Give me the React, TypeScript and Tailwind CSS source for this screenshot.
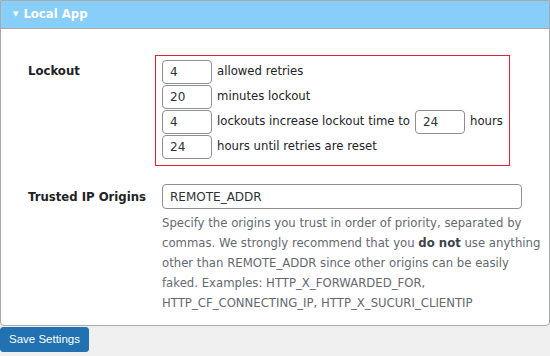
import React from "react";

const font = { fontFamily: '"DejaVu Sans", Verdana, sans-serif' };

function NumInput({ value, className = "w-[50px]" }: { value: string; className?: string }) {
  return (
    <input
      defaultValue={value}
      className={`${className} h-[24px] rounded-[4px] border border-[#8c8f94] bg-white px-[7px] text-[12px] text-[#2c3338] outline-none`}
      style={font}
    />
  );
}

function LockoutRow({ children }: { children: React.ReactNode }) {
  return <div className="flex h-[25px] items-center gap-[5px]">{children}</div>;
}

export default function App() {
  return (
    <div className="h-[356px] w-[550px] overflow-hidden bg-[#f0f0f1] text-[11.7px] text-[#1d2327]" style={font}>
      {/* Panel */}
      <div className="h-[326px] rounded-b-[4px] border border-[#a7aaad] bg-white">
        <div className="flex h-[28px] items-center gap-[5px] border-b border-[#a7aaad] bg-[#87cefa] pl-[12px] font-bold text-white">
          <span className="text-[7px]">▼</span>
          <span>Local App</span>
        </div>

        <div className="pl-[27px] pt-[26px]">
          {/* Lockout */}
          <div className="flex">
            <div className="w-[127px] shrink-0 pt-[8px] font-bold">Lockout</div>
            <div className="border border-[#e2203c] pb-[6px] pl-[6px] pr-[6px] pt-[3px]">
              <LockoutRow>
                <NumInput value="4" />
                <span>allowed retries</span>
              </LockoutRow>
              <LockoutRow>
                <NumInput value="20" />
                <span>minutes lockout</span>
              </LockoutRow>
              <LockoutRow>
                <NumInput value="4" />
                <span>lockouts increase lockout time to</span>
                <NumInput value="24" />
                <span>hours</span>
              </LockoutRow>
              <LockoutRow>
                <NumInput value="24" />
                <span>hours until retries are reset</span>
              </LockoutRow>
            </div>
          </div>

          {/* Trusted IP Origins */}
          <div className="mt-[18px] flex">
            <div className="w-[127px] shrink-0 whitespace-nowrap pt-[5px] font-bold">Trusted IP Origins</div>
            <div className="pl-[7px]">
              <input
                defaultValue="REMOTE_ADDR"
                className="h-[25px] w-[360px] rounded-[4px] border border-[#8c8f94] bg-white px-[7px] text-[12px] text-[#2c3338] outline-none"
                style={font}
              />
              <p className="mt-[4px] whitespace-nowrap text-[11.7px] leading-[20px] text-[#646970]">
                Specify the origins you trust in order of priority, separated by
                <br />
                commas. We strongly recommend that you <b className="text-[#3c434a]">do not</b> use anything
                <br />
                other than REMOTE_ADDR since other origins can be easily
                <br />
                faked. Examples: HTTP_X_FORWARDED_FOR,
                <br />
                HTTP_CF_CONNECTING_IP, HTTP_X_SUCURI_CLIENTIP
              </p>
            </div>
          </div>
        </div>
      </div>

      <button
        className="mt-[1px] h-[25px] rounded-[3px] border border-[#2271b1] bg-[#2271b1] px-[8px] text-[11.5px] text-white"
        style={{ fontFamily: '"Liberation Sans", Arial, sans-serif' }}
      >
        Save Settings
      </button>
    </div>
  );
}
